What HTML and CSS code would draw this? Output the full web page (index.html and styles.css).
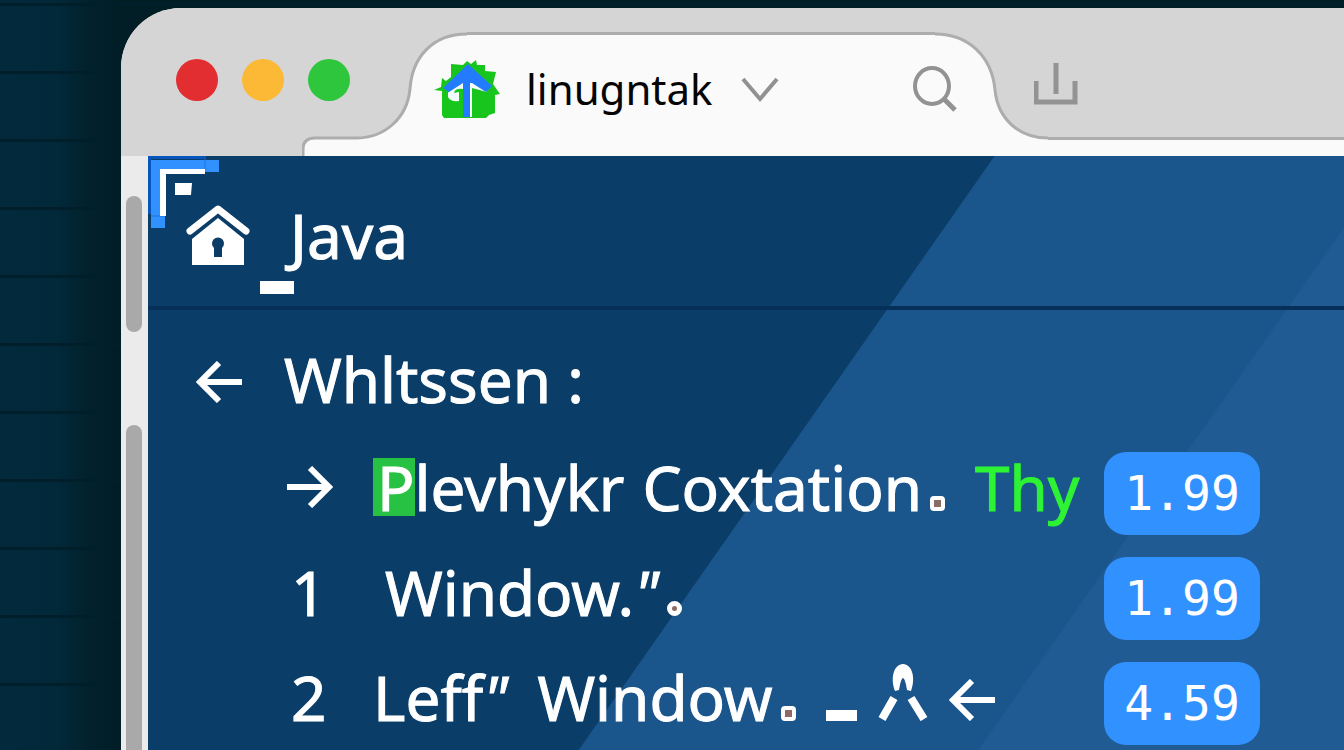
FILE: index.html
```html
<!DOCTYPE html>
<html lang="en">

<head>
  <meta charset="UTF-8">
  <meta name="viewport" content="width=device-width, initial-scale=1.0">
  <title>linugntak</title>
  <link rel="stylesheet" href="styles.css">
</head>

<body>
  <!-- arrow shared by the list and the heading -->
  <svg class="sprite" aria-hidden="true">
    <symbol id="arrow-left" viewBox="0 0 46 42">
      <path d="M46 21H4M23 2L4 21l19 19" fill="none" stroke="currentColor" stroke-width="6" />
    </symbol>
  </svg>

  <div class="window">
    <header class="titlebar">
      <div class="lights">
        <button class="light red" aria-label="Close"></button>
        <button class="light yellow" aria-label="Minimize"></button>
        <button class="light green" aria-label="Zoom"></button>
      </div>

      <div class="tab">
        <div class="tab-shape" aria-hidden="true">
          <svg width="165" height="124" viewBox="0 0 165 124">
            <path d="M1 124v-7Q1 106 13 106H54C82 106 105 87 108 57C110 26 130 2 165 2V124z" fill="#fafafa" />
            <path d="M1 124v-7Q1 106 13 106H54C82 106 105 87 108 57C110 26 130 2 165 2" fill="none" stroke="#adadad" stroke-width="3" />
          </svg>
          <div class="tab-middle"></div>
          <svg width="113" height="124" viewBox="0 0 113 124">
            <path d="M0 2C34 2 57 25 60 58C63 88 85 106 113 106V124H0z" fill="#fafafa" />
            <path d="M0 2C34 2 57 25 60 58C63 88 85 106 113 106" fill="none" stroke="#adadad" stroke-width="3" />
          </svg>
        </div>
        <div class="tab-content">
          <svg class="favicon" width="68" height="60" viewBox="0 0 68 60">
            <path d="M17 5l12 1 4-4 4 3 5-4 1 5h8v6l11 1-3 12 7 10-5 1v18l-6 2-3 3H10l-2-3V32L0 31l7-3 1-9 4 3 5-4z" fill="#17c51d" />
            <path d="M14 34q5-11 15-12h9q12 2 15 11l-15-4V58H29V30q-8-1-9 4l5-1v9q-9 1-11-4z" fill="#f4fbfa" />
            <path d="M34 5L58 27 52 33 38 24 36 24V58H29V24L15 33 9 29z" fill="#237bff" />
          </svg>
          <span class="tab-title">linugntak</span>
          <button class="icon-button" aria-label="Tab menu">
            <svg width="38" height="28" viewBox="0 0 38 28">
              <path d="M2 4L19 24 36 4" fill="none" stroke="#919191" stroke-width="4" />
            </svg>
          </button>
          <button class="icon-button search" aria-label="Search">
            <svg width="46" height="46" viewBox="0 0 46 46">
              <ellipse cx="20" cy="20" rx="17" ry="18" fill="none" stroke="#929292" stroke-width="4" />
              <path d="M31 32L43 44" stroke="#929292" stroke-width="5" />
            </svg>
          </button>
        </div>
      </div>

      <div class="tab-rest">
        <button class="icon-button" aria-label="Share">
          <svg width="44" height="42" viewBox="0 0 44 42">
            <path d="M2 18V39H41V18M22 0V31" fill="none" stroke="#939393" stroke-width="5" />
          </svg>
        </button>
      </div>
    </header>

    <div class="body">
      <div class="gutter" aria-hidden="true">
        <div class="thumb"></div>
        <div class="thumb thumb-long"></div>
      </div>

      <main class="page">
        <svg class="corner" width="72" height="72" viewBox="0 0 72 72" aria-hidden="true">
          <path d="M0 0H58V3H3V58H0z" fill="#0756bd" />
          <path d="M3 4H71V16H57V14H13V60H17V72H3z" fill="#3192ff" />
          <path d="M57 3V16M3 60H17" stroke="#1974dd" />
          <path d="M12 13H57V18H18V60H12zM27 27H44L43 39H27z" fill="#fff" />
        </svg>

        <header class="page-header">
          <svg class="home" width="64" height="62" viewBox="0 0 64 62" aria-hidden="true">
            <path d="M4 27L32 5 60 27" fill="none" stroke="#fff" stroke-width="7" stroke-linecap="round" stroke-linejoin="round" />
            <path d="M32 14L58 35V61H6V35z" fill="#fff" />
            <path d="M28 53V44a6 6 0 1 1 8 0V53z" fill="#0b3c66" />
          </svg>
          <h1>Java</h1>
          <span class="cursor"></span>
        </header>

        <div class="heading">
          <svg class="arrow" width="46" height="42"><use href="#arrow-left" /></svg>
          <h2>Whltssen :</h2>
        </div>

        <ul class="list">
          <li>
            <span class="marker"><svg class="arrow flip" width="46" height="42"><use href="#arrow-left" /></svg></span>
            <span class="text tight">
              <span><mark>P</mark>levhykr</span>
              <span>Coxtation<i class="dot"></i></span>
              <span class="keyword">Thy</span>
            </span>
            <span class="price">1.99</span>
          </li>
          <li>
            <span class="marker number">1</span>
            <span class="text indent">
              <span>Window.<em>"</em><i class="dot round"></i></span>
            </span>
            <span class="price">1.99</span>
          </li>
          <li>
            <span class="marker number">2</span>
            <span class="text">
              <span>Leff<em>"</em></span>
              <span>Window<i class="dot"></i></span>
              <span class="signs">
                <i class="dash"></i>
                <svg width="52" height="57" viewBox="0 0 52 57" aria-hidden="true">
                  <path d="M18 27C13 14 17 0 26 0S39 14 34 27L30 26Q28 14 26 14T22 26z" fill="#fff" />
                  <path d="M17 34L5 55M34 34L47 55" stroke="#fff" stroke-width="8" />
                </svg>
                <svg class="arrow" width="46" height="42"><use href="#arrow-left" /></svg>
              </span>
            </span>
            <span class="price">4.59</span>
          </li>
        </ul>
      </main>
    </div>
  </div>
</body>

</html>
```

FILE: styles.css
```css
html {
  box-sizing: border-box;
  font-family: "Noto Sans", "Open Sans", sans-serif;
  font-size: 62px;
}

*,
*::before,
*::after {
  box-sizing: inherit;
}

body {
  margin: 0;
  padding: 8px 0 0 121px;
  min-height: 100vh;
  overflow: hidden;
  color: #fff;
  background:
    repeating-linear-gradient(transparent 0 3px, #011f2b 3px 6px, transparent 6px 68px),
    linear-gradient(90deg, #022a3c 0, #02293a 56px, #02212c 90px, #011d26 121px);
}

h1,
h2 {
  margin: 0;
  font-size: 1rem;
  font-weight: 400;
  line-height: 84px;
}

ul {
  margin: 0;
  padding: 0;
  list-style: none;
}

svg {
  display: block;
  flex: none;
}

.sprite {
  position: absolute;
  width: 0;
  height: 0;
}

.window {
  display: flex;
  flex-direction: column;
  min-height: calc(100vh - 8px);
  border-radius: 60px 0 0 0;
  overflow: hidden;
  background: #ebebeb;
}

/* title bar */
.titlebar {
  display: flex;
  align-items: flex-end;
  height: 148px;
  background: #d5d5d5;
}

.lights {
  display: flex;
  align-self: flex-start;
  gap: 24px;
  width: 181px;
  padding: 51px 0 0 55px;
}

.light {
  flex: none;
  width: 42px;
  height: 42px;
  padding: 0;
  border: 0;
  border-radius: 50%;
}

.red {
  background: #e22d31;
}

.yellow {
  background: #fcb935;
}

.green {
  background: #2dc63c;
}

.tab {
  display: grid;
  flex: 0 0 746px;
}

.tab-shape,
.tab-content {
  display: flex;
  grid-area: 1 / 1;
}

.tab-middle {
  flex: 1;
  border-top: 3px solid #adadad;
  background: #fafafa;
}

.tab-content {
  align-items: center;
  padding: 0 90px 10px 132px;
  color: #050505;
}

.tab-title {
  margin: 0 28px 0 24px;
  font-size: 42px;
  line-height: 60px;
}

.icon-button {
  padding: 0;
  border: 0;
  background: none;
}

.search {
  margin-left: auto;
}

.tab-rest {
  display: flex;
  flex: 1;
  height: 124px;
  margin-left: -14px;
  padding: 0 0 51px;
  align-items: flex-end;
  background: linear-gradient(#adadad 0 3px, #fafafa 3px) 14px 105px no-repeat;
}

/* window content */
.body {
  display: flex;
  flex: 1;
}

.gutter {
  display: flex;
  flex-direction: column;
  flex: 0 0 27px;
  gap: 93px;
  padding: 40px 6px 0 5px;
}

.thumb {
  height: 136px;
  border-radius: 8px;
  background: #a9a9a9;
}

.thumb-long {
  flex: 1;
  height: auto;
  border-radius: 8px 8px 0 0;
}

.page {
  position: relative;
  flex: 1;
  background: linear-gradient(125deg, #0a3d68 0 693px, #1a558c 694px 1020px, #205b93 1022px);
}

.corner {
  position: absolute;
  top: 0;
  left: 0;
}

.page-header {
  position: relative;
  display: flex;
  align-items: center;
  gap: 40px;
  height: 154px;
  padding: 8px 0 0 38px;
  border-bottom: 4px solid #06305a;
}

.cursor {
  position: absolute;
  left: 112px;
  bottom: 12px;
  width: 34px;
  height: 13px;
  background: #fff;
}

.page-header h1,
.heading h2,
.text,
.number {
  -webkit-text-stroke: 1px currentColor;
}

.heading {
  display: flex;
  align-items: baseline;
  gap: 42px;
  padding: 27px 0 31px 48px;
}

.flip {
  transform: scaleX(-1);
}

.list {
  display: grid;
  gap: 22px;
  padding: 0 84px 7px 139px;
}

.list li {
  display: flex;
  align-items: center;
  line-height: 68px;
}

.marker {
  flex: 0 0 86px;
  padding-bottom: 14px;
}

.number {
  padding-left: 4px;
}

.text {
  display: flex;
  flex: 1;
  align-items: baseline;
  gap: 30px;
  padding-bottom: 14px;
  white-space: nowrap;
}

.tight {
  gap: 18px;
}

.indent {
  padding-left: 12px;
}

mark {
  display: inline-block;
  height: 58px;
  padding-left: 4px;
  line-height: 58px;
  color: #fff;
  background: #27c243;
}

.keyword {
  margin-left: 12px;
  color: #2ef335;
}

.dot {
  display: inline-block;
  width: 15px;
  height: 15px;
  margin-left: 8px;
  border: 4px solid #fff;
  border-radius: 4px;
  background: #8a6b66;
}

.round {
  border-width: 5px;
  border-radius: 50%;
}

.signs {
  display: flex;
  align-items: baseline;
  gap: 20px;
}

.dash {
  width: 31px;
  height: 11px;
  background: #fff;
}

.price {
  flex: 0 0 156px;
  border-radius: 22px;
  font-family: "DejaVu Sans Mono", monospace;
  font-size: 48px;
  line-height: 83px;
  text-align: center;
  background: #3191ff;
}
```
